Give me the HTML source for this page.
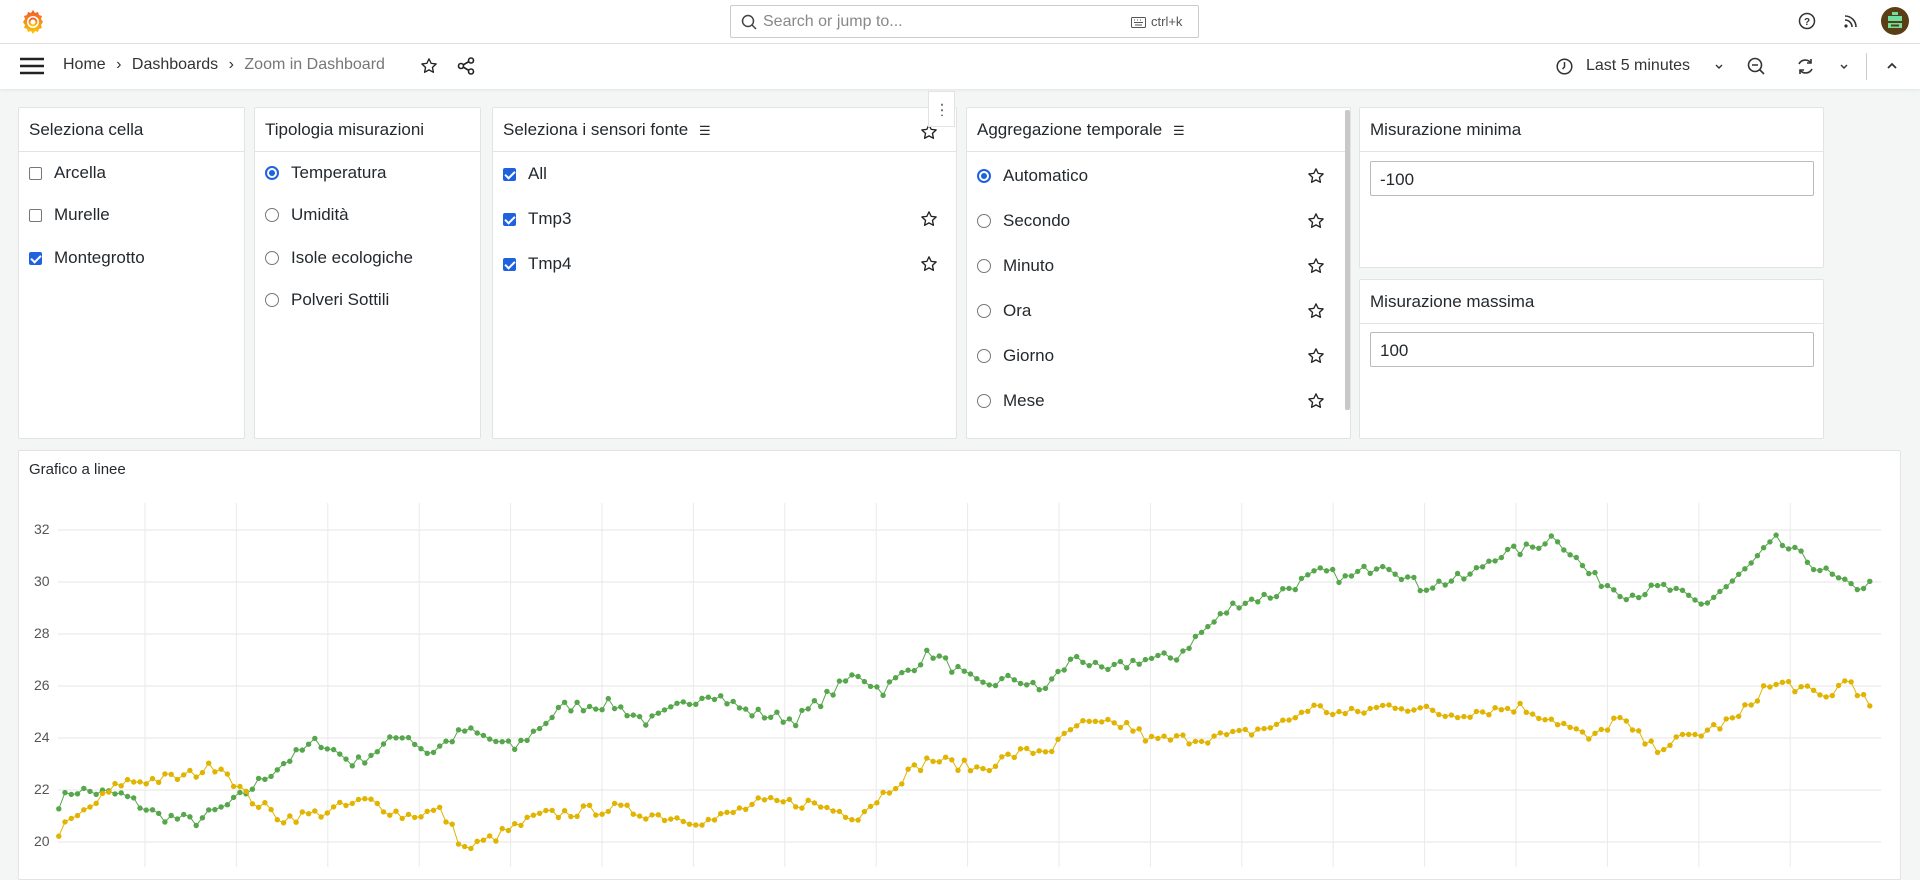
<!DOCTYPE html>
<html><head><meta charset="utf-8"><style>
*{box-sizing:border-box;margin:0;padding:0}
body{width:1920px;height:867px;overflow:hidden;background:#f4f5f5;font-family:"Liberation Sans",sans-serif;color:#24292e;position:relative}
.abs{position:absolute}
.top{left:0;top:0;width:1920px;height:44px;background:#fff;border-bottom:1px solid #e4e4e4}
.bar2{left:0;top:44px;width:1920px;height:45px;background:#fff;box-shadow:0 1px 3px rgba(0,0,0,.08)}
.panel{position:absolute;background:#fff;border:1px solid #e2e3e5;border-radius:2px}
.ph{height:44px;border-bottom:1px solid #e2e3e5;font-size:17px;padding:12px 10px;white-space:nowrap}
.item{position:absolute;left:10px;font-size:17px;display:flex;align-items:center}
.cb{width:13px;height:13px;border:1px solid #777;border-radius:2px;margin-right:12px;background:#fff}
.cb.on{background:#1f62e0;border-color:#1f62e0;position:relative}
.cb.on:after{content:"";position:absolute;left:3px;top:0px;width:4px;height:8px;border:solid #fff;border-width:0 2px 2px 0;transform:rotate(45deg)}
.rd{width:14px;height:14px;border:1px solid #777;border-radius:50%;margin-right:12px}
.rd.on{border:2px solid #1f62e0;position:relative}
.rd.on:after{content:"";position:absolute;left:2px;top:2px;width:6px;height:6px;border-radius:50%;background:#1f62e0}
.star{position:absolute;width:18px;height:18px}
.ylab{position:absolute;left:34px;font-size:14px;color:#555}
</style></head><body>
<div class="abs top">
 <svg class="abs" style="left:20px;top:8px" width="26" height="28" viewBox="0 0 26 28"><defs><linearGradient id="g" x1="0" y1="1" x2="0" y2="0"><stop offset="0" stop-color="#fbca0a"/><stop offset="1" stop-color="#f05a28"/></linearGradient></defs><path d="M13 2l2 3 3-1 1 3 3 1-1 3 2 3-2 3 1 3-3 1-1 3-3-1-2 3-2-3-3 1-1-3-3-1 1-3-2-3 2-3-1-3 3-1 1-3 3 1z" fill="url(#g)"/><circle cx="13" cy="14" r="6" fill="#fff"/><circle cx="13" cy="14" r="3.5" fill="none" stroke="url(#g)" stroke-width="2"/></svg>
 <div class="abs" style="left:730px;top:5px;width:469px;height:33px;border:1px solid #ccc;border-radius:2px">
  <svg class="abs" style="left:10px;top:8px" width="16" height="16" viewBox="0 0 16 16"><circle cx="7" cy="7" r="5.5" fill="none" stroke="#444" stroke-width="1.5"/><path d="M11 11l4 4" stroke="#444" stroke-width="1.5"/></svg>
  <span class="abs" style="left:32px;top:7px;font-size:16px;color:#888">Search or jump to...</span>
  <svg class="abs" style="left:400px;top:11px" width="15" height="11" viewBox="0 0 15 11"><rect x=".5" y=".5" width="14" height="10" rx="1" fill="none" stroke="#555"/><path d="M3 3h1M6 3h1M9 3h1M12 3h0M3 5.5h9M4 8h7" stroke="#555"/></svg>
  <span class="abs" style="left:420px;top:8px;font-size:13px;color:#555">ctrl+k</span>
 </div>
 <svg class="abs" style="left:1798px;top:12px" width="18" height="18" viewBox="0 0 18 18"><circle cx="9" cy="9" r="7.5" fill="none" stroke="#333" stroke-width="1.5"/><text x="9" y="13" font-size="10" text-anchor="middle" font-family="Liberation Sans" fill="#333" font-weight="bold">?</text></svg>
 <svg class="abs" style="left:1843px;top:13px" width="16" height="16" viewBox="0 0 16 16"><circle cx="3" cy="13" r="1.6" fill="#333"/><path d="M2 7a7 7 0 0 1 7 7M2 3a11 11 0 0 1 11 11" fill="none" stroke="#333" stroke-width="1.6"/></svg>
 <svg class="abs" style="left:1881px;top:7px" width="28" height="28" viewBox="0 0 28 28"><circle cx="14" cy="14" r="14" fill="#5a3e16"/><rect x="7" y="9" width="14" height="5" fill="#6ee0a0"/><rect x="11" y="5" width="6" height="3" fill="#6ee0a0"/><rect x="7" y="16" width="14" height="5" fill="#6ee0a0"/><rect x="10" y="17.5" width="8" height="2" fill="#5a3e16"/></svg>
</div>
<div class="abs bar2">
 <svg class="abs" style="left:20px;top:13px" width="24" height="18" viewBox="0 0 24 18"><path d="M0 2h24M0 9h24M0 16h24" stroke="#222" stroke-width="2.4"/></svg>
 <div class="abs" style="left:63px;top:12px;font-size:16px;color:#333;white-space:nowrap">Home <span style="margin:0 6px">›</span> Dashboards <span style="margin:0 6px">›</span> <span style="color:#777">Zoom in Dashboard</span></div>
 <svg class="abs star" style="left:420px;top:13px" viewBox="0 0 24 24"><path d="M12 2.5l2.9 6 6.6.8-4.9 4.6 1.3 6.5L12 17.2l-5.9 3.2 1.3-6.5-4.9-4.6 6.6-.8z" fill="none" stroke="#222" stroke-width="1.8" stroke-linejoin="round"/></svg>
 <svg class="abs" style="left:457px;top:13px" width="18" height="18" viewBox="0 0 18 18"><circle cx="14" cy="3.5" r="2.5" fill="none" stroke="#222" stroke-width="1.6"/><circle cx="4" cy="9" r="2.5" fill="none" stroke="#222" stroke-width="1.6"/><circle cx="14" cy="14.5" r="2.5" fill="none" stroke="#222" stroke-width="1.6"/><path d="M6 8l6-3.5M6 10l6 3.5" stroke="#222" stroke-width="1.6"/></svg>
 <svg class="abs" style="left:1556px;top:14px" width="17" height="17" viewBox="0 0 17 17"><circle cx="8.5" cy="8.5" r="7.3" fill="none" stroke="#333" stroke-width="1.5"/><path d="M8.5 4v5l-2 2" fill="none" stroke="#333" stroke-width="1.5"/></svg>
 <span class="abs" style="left:1586px;top:13px;font-size:16px;color:#333">Last 5 minutes</span>
 <svg class="abs" style="left:1714px;top:19px" width="10" height="8" viewBox="0 0 10 8"><path d="M2 2l3 3 3-3" fill="none" stroke="#333" stroke-width="1.4"/></svg>
 <svg class="abs" style="left:1747px;top:13px" width="19" height="19" viewBox="0 0 19 19"><circle cx="8" cy="8" r="6.5" fill="none" stroke="#333" stroke-width="1.6"/><path d="M5 8h6M13 13l4 4" stroke="#333" stroke-width="1.6"/></svg>
 <svg class="abs" style="left:1796px;top:13px" width="19" height="19" viewBox="0 0 19 19"><path d="M15 6a7 7 0 0 0-12 1M4 13a7 7 0 0 0 12-1" fill="none" stroke="#333" stroke-width="1.6"/><path d="M15 2v4h-4M4 17v-4h4" fill="none" stroke="#333" stroke-width="1.6"/></svg>
 <svg class="abs" style="left:1839px;top:19px" width="10" height="8" viewBox="0 0 10 8"><path d="M2 2l3 3 3-3" fill="none" stroke="#333" stroke-width="1.4"/></svg>
 <div class="abs" style="left:1866px;top:9px;width:1px;height:27px;background:#ccc"></div>
 <svg class="abs" style="left:1886px;top:17px" width="12" height="10" viewBox="0 0 12 10"><path d="M2 7l4-4 4 4" fill="none" stroke="#333" stroke-width="1.8"/></svg>
</div>
<div class="abs" style="left:928px;top:91px;width:27px;height:36px;background:#fff;border:1px solid #e2e3e5;z-index:3"><div style="position:absolute;left:12px;top:10px;width:2.4px;height:14px;background:radial-gradient(circle,#777 1.2px,transparent 1.3px) 0 0/2.4px 5.5px"></div></div>

<div class="panel" style="left:18px;top:107px;width:227px;height:332px"><div class="ph">Seleziona cella</div>
 <div class="item" style="top:55px"><span class="cb"></span>Arcella</div>
 <div class="item" style="top:97px"><span class="cb"></span>Murelle</div>
 <div class="item" style="top:140px"><span class="cb on"></span>Montegrotto</div>
</div>
<div class="panel" style="left:254px;top:107px;width:227px;height:332px"><div class="ph">Tipologia misurazioni</div>
 <div class="item" style="top:55px"><span class="rd on"></span>Temperatura</div>
 <div class="item" style="top:97px"><span class="rd"></span>Umidità</div>
 <div class="item" style="top:140px"><span class="rd"></span>Isole ecologiche</div>
 <div class="item" style="top:182px"><span class="rd"></span>Polveri Sottili</div>
</div>
<div class="panel" style="left:492px;top:107px;width:465px;height:332px"><div class="ph">Seleziona i sensori fonte <span style="font-size:13px;margin-left:6px">☰</span></div>
 <svg class="star" style="left:427px;top:15px" viewBox="0 0 24 24"><path d="M12 2.5l2.9 6 6.6.8-4.9 4.6 1.3 6.5L12 17.2l-5.9 3.2 1.3-6.5-4.9-4.6 6.6-.8z" fill="none" stroke="#222" stroke-width="1.8" stroke-linejoin="round"/></svg>
 <div class="item" style="top:56px"><span class="cb on"></span>All</div>
 <div class="item" style="top:101px"><span class="cb on"></span>Tmp3</div>
 <svg class="star" style="left:427px;top:102px" viewBox="0 0 24 24"><path d="M12 2.5l2.9 6 6.6.8-4.9 4.6 1.3 6.5L12 17.2l-5.9 3.2 1.3-6.5-4.9-4.6 6.6-.8z" fill="none" stroke="#222" stroke-width="1.8" stroke-linejoin="round"/></svg>
 <div class="item" style="top:146px"><span class="cb on"></span>Tmp4</div>
 <svg class="star" style="left:427px;top:147px" viewBox="0 0 24 24"><path d="M12 2.5l2.9 6 6.6.8-4.9 4.6 1.3 6.5L12 17.2l-5.9 3.2 1.3-6.5-4.9-4.6 6.6-.8z" fill="none" stroke="#222" stroke-width="1.8" stroke-linejoin="round"/></svg>
</div>
<div class="panel" style="left:966px;top:107px;width:385px;height:332px;overflow:hidden"><div class="ph" style="width:378px">Aggregazione temporale <span style="font-size:13px;margin-left:6px">☰</span></div>
 <div class="abs" style="left:378px;top:2px;width:5px;height:300px;background:#c8c8c8;border-radius:2px"></div>
 <div id="agg"></div>
</div>
<div class="panel" style="left:1359px;top:107px;width:465px;height:161px"><div class="ph">Misurazione minima</div>
 <div class="abs" style="left:10px;top:53px;width:444px;height:35px;border:1px solid #bbb;border-radius:2px;font-size:17px;padding:8px 9px">-100</div></div>
<div class="panel" style="left:1359px;top:279px;width:465px;height:160px"><div class="ph">Misurazione massima</div>
 <div class="abs" style="left:10px;top:52px;width:444px;height:35px;border:1px solid #bbb;border-radius:2px;font-size:17px;padding:8px 9px">100</div></div>

<div class="panel" style="left:18px;top:450px;width:1883px;height:430px"><div style="font-size:15px;padding:10px 10px">Grafico a linee</div></div>
<svg id="ch" class="abs" style="left:0;top:0" width="1920" height="867"></svg>
<div class="ylab" style="top:521px">32</div><div class="ylab" style="top:573px">30</div><div class="ylab" style="top:625px">28</div><div class="ylab" style="top:677px">26</div><div class="ylab" style="top:729px">24</div><div class="ylab" style="top:781px">22</div><div class="ylab" style="top:833px">20</div>
<script>
var star='<path d="M12 2.5l2.9 6 6.6.8-4.9 4.6 1.3 6.5L12 17.2l-5.9 3.2 1.3-6.5-4.9-4.6 6.6-.8z" fill="none" stroke="#222" stroke-width="1.8" stroke-linejoin="round"/>';
var names=["Automatico","Secondo","Minuto","Ora","Giorno","Mese","Anno"],h="";
names.forEach(function(n,i){var t=58+i*45;h+='<div class="item" style="top:'+t+'px"><span class="rd'+(i==0?' on':'')+'"></span>'+n+'</div>';if(i<6)h+='<svg class="star" style="left:340px;top:'+(t+1)+'px" viewBox="0 0 24 24">'+star+'</svg>';});
document.getElementById('agg').innerHTML=h;
var s="",sc=1.2245;
function Y(v){return 530+(32-v)*26}
for(var v=32;v>=20;v-=2)s+='<line x1="58" x2="1881" y1="'+Y(v)+'" y2="'+Y(v)+'" stroke="#e6e6e6"/>';
for(var x=145;x<1881;x+=91.4)s+='<line x1="'+x+'" x2="'+x+'" y1="503" y2="867" stroke="#eaeaea"/>';
var G=[[48,21.5],[60,22],[100,21.8],[130,21],[160,20.8],[190,21.5],[230,23],[260,23.9],[290,23],[330,24.2],[350,23.4],[380,24.3],[420,23.6],[460,25.2],[500,25.3],[530,24.6],[580,25.8],[610,25],[650,24.7],[700,26.5],[720,25.8],[760,27.3],[800,26],[830,26.3],[850,25.8],[880,27.2],[900,26.5],[930,27],[960,27.1],[980,28],[1010,29.2],[1040,29.5],[1080,30.4],[1100,30.1],[1130,30.8],[1160,29.8],[1200,30.2],[1220,31],[1250,31.3],[1270,31.8],[1300,30.2],[1330,29.5],[1360,29.8],[1390,29.1],[1420,30.2],[1450,31.6],[1470,31],[1510,29.8],[1528,29.9]];
var Yl=[[48,20.4],[70,21.2],[100,22.3],[150,22.5],[180,23],[200,21.8],[230,20.9],[260,21.1],[300,21.6],[330,21],[360,21.2],[380,19.7],[400,20.1],[440,21],[500,21.3],[540,21],[580,20.8],[620,21.5],[660,21.5],[700,21],[740,22.6],[760,23.2],[800,22.8],[830,23.4],[860,23.6],[880,24.5],[920,24.5],[940,23.9],[980,24],[1010,24.1],[1050,24.6],[1070,25.2],[1100,24.9],[1140,25.3],[1180,24.9],[1240,25.2],[1270,24.7],[1300,23.9],[1320,24.8],[1350,23.6],[1390,24.2],[1420,24.8],[1440,25.9],[1460,26.1],[1490,25.5],[1510,26.3],[1528,25.1]];
var seed=7;function rnd(){seed=(seed*16807)%2147483647;return seed/2147483647-.5}
function ser(K,c){var pts=[];for(var dx=48;dx<=1528;dx+=5.1){var i=0;while(i<K.length-2&&K[i+1][0]<dx)i++;var a=K[i],b=K[i+1],t=Math.min(1,Math.max(0,(dx-a[0])/(b[0]-a[0])));var v=a[1]+(b[1]-a[1])*t+rnd()*0.45;pts.push([(dx*sc).toFixed(1),Y(v).toFixed(1)]);}
 s+='<polyline fill="none" stroke="'+c+'" stroke-width="1" points="'+pts.map(function(p){return p.join(',')}).join(' ')+'"/>';
 pts.forEach(function(p){s+='<circle cx="'+p[0]+'" cy="'+p[1]+'" r="2.7" fill="'+c+'"/>'});}
ser(G,"#56a64b");ser(Yl,"#e0b400");
document.getElementById('ch').innerHTML=s;
</script>
</body></html>
